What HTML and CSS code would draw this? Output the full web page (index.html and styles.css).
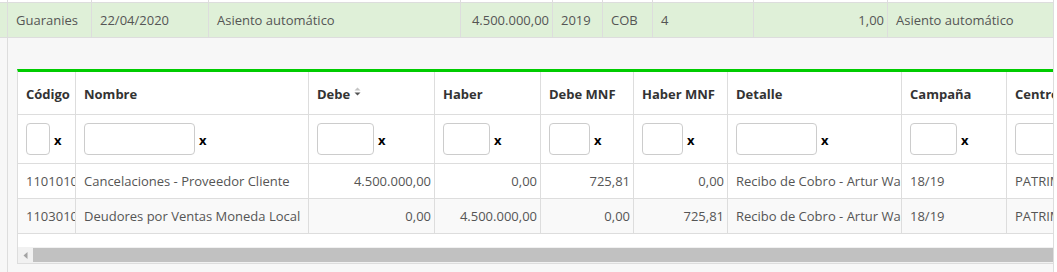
FILE: index.html
```html
<!DOCTYPE html>
<html lang="es">
<head>
<meta charset="utf-8">
<title>Asientos</title>
<link rel="stylesheet" href="styles.css">
</head>
<body>
<table class="grid">
  <colgroup>
    <col class="g0"><col class="g1"><col class="g2"><col class="g3"><col class="g4">
    <col class="g5"><col class="g6"><col class="g7"><col class="g8"><col class="g9">
  </colgroup>
  <tr class="strip">
    <td><div class="fill"></div></td><td><div class="fill"></div></td><td><div class="fill"></div></td>
    <td><div class="fill"></div></td><td><div class="fill"></div></td><td><div class="fill"></div></td>
    <td><div class="fill"></div></td><td><div class="fill"></div></td><td><div class="fill"></div></td>
    <td><div class="fill"></div></td>
  </tr>
  <tr class="success">
    <td></td>
    <td>Guaranies</td>
    <td>22/04/2020</td>
    <td>Asiento automático</td>
    <td class="num">4.500.000,00</td>
    <td>2019</td>
    <td>COB</td>
    <td>4</td>
    <td class="num">1,00</td>
    <td>Asiento automático</td>
  </tr>
  <tr class="detail-row">
    <td class="gutter"></td>
    <td colspan="9" class="detail-cell">
      <div class="detail">
        <div class="panel">
          <div class="sub-wrap">
            <table class="sub">
              <colgroup>
                <col class="s0"><col class="s1"><col class="s2"><col class="s3"><col class="s4">
                <col class="s5"><col class="s6"><col class="s7"><col class="s8">
              </colgroup>
              <tr class="head">
                <th>Código</th>
                <th>Nombre</th>
                <th>Debe<svg class="sort" width="8" height="10" viewBox="0 0 8 10"><path d="M0.5 3.5 L3.5 0.5 L6.5 3.5 Z" fill="#c4c4c4"/><path d="M0.5 5.5 L6.5 5.5 L3.5 8.5 Z" fill="#555"/></svg></th>
                <th>Haber</th>
                <th>Debe MNF</th>
                <th>Haber MNF</th>
                <th>Detalle</th>
                <th>Campaña</th>
                <th>Centro de Costo</th>
              </tr>
              <tr class="filters">
                <td><div class="flt"><input class="in w24" type="text"><span class="clr">x</span></div></td>
                <td><div class="flt"><input class="in w111" type="text"><span class="clr">x</span></div></td>
                <td><div class="flt"><input class="in w57" type="text"><span class="clr">x</span></div></td>
                <td><div class="flt"><input class="in w47" type="text"><span class="clr">x</span></div></td>
                <td><div class="flt"><input class="in w41" type="text"><span class="clr">x</span></div></td>
                <td><div class="flt"><input class="in w41" type="text"><span class="clr">x</span></div></td>
                <td><div class="flt"><input class="in w81" type="text"><span class="clr">x</span></div></td>
                <td><div class="flt"><input class="in w47" type="text"><span class="clr">x</span></div></td>
                <td><div class="flt"><input class="in w81" type="text"><span class="clr">x</span></div></td>
              </tr>
              <tr class="data">
                <td>1101010</td>
                <td>Cancelaciones - Proveedor Cliente</td>
                <td class="num">4.500.000,00</td>
                <td class="num">0,00</td>
                <td class="num">725,81</td>
                <td class="num">0,00</td>
                <td>Recibo de Cobro - Artur Walter</td>
                <td>18/19</td>
                <td>PATRIMONIO</td>
              </tr>
              <tr class="data alt">
                <td>1103010</td>
                <td>Deudores por Ventas Moneda Local</td>
                <td class="num">0,00</td>
                <td class="num">4.500.000,00</td>
                <td class="num">0,00</td>
                <td class="num">725,81</td>
                <td>Recibo de Cobro - Artur Walter</td>
                <td>18/19</td>
                <td>PATRIMONIO</td>
              </tr>
            </table>
          </div>
          <div class="hscroll">
            <span class="arrow"><svg width="5" height="7" viewBox="0 0 5 7"><path d="M4.5 0 L0.5 3.5 L4.5 7 Z" fill="#a3a3a3"/></svg></span>
            <span class="thumb"></span>
          </div>
        </div>
      </div>
    </td>
  </tr>
</table>
</body>
</html>
```

FILE: styles.css
```css
html, body {
  margin: 0;
  background: #fff;
}

body {
  font-family: "Open Sans", "DejaVu Sans", sans-serif;
  font-size: 13px;
  color: #555;
  height: 272px;
  overflow: hidden;
}

table {
  border-collapse: separate;
  border-spacing: 0;
  table-layout: fixed;
}

.grid {
  width: 1054px;
}

.g0 { width: 8px; }
.g1 { width: 84px; }
.g2 { width: 117px; }
.g3 { width: 252px; }
.g4 { width: 92px; }
.g5 { width: 50px; }
.g6 { width: 50px; }
.g7 { width: 101px; }
.g8 { width: 134px; }
.g9 { width: 166px; }

.grid td {
  border-right: 1px solid #ddd;
  border-bottom: 1px solid #ddd;
  padding: 8px;
  line-height: 18px;
  white-space: nowrap;
  overflow: hidden;
  vertical-align: top;
}

.grid .strip td {
  padding: 0;
  line-height: 0;
}

.fill {
  height: 2px;
}

.success td {
  background: #dff0d8;
}

.grid td.num,
.sub td.num {
  text-align: right;
  padding-right: 3px;
}

.grid td.gutter,
.grid td.detail-cell {
  padding: 0;
  background: #f7f7f7;
  border-bottom: none;
}

.detail {
  overflow: hidden;
  padding: 31px 0 10px 9px;
}

.panel {
  width: 1060px;
  background: #fff;
  border: 1px solid #ddd;
  border-top: 3px solid #00cc00;
}

.sub-wrap {
  overflow: hidden;
}

.sub {
  width: 1139px;
}

.s0 { width: 58px; }
.s1 { width: 233px; }
.s2 { width: 126px; }
.s3 { width: 106px; }
.s4 { width: 93px; }
.s5 { width: 94px; }
.s6 { width: 174px; }
.s7 { width: 105px; }
.s8 { width: 150px; }

.sub th,
.sub td {
  border-right: 1px solid #ddd;
  border-bottom: 1px solid #ddd;
  padding: 8px;
  line-height: 18px;
  white-space: nowrap;
  overflow: hidden;
  text-align: left;
  vertical-align: top;
}

.sub th {
  font-weight: 700;
  color: #333;
  padding-top: 13px;
  padding-bottom: 11px;
}

.sort {
  margin-left: 4px;
  vertical-align: 2px;
}

.flt {
  display: flex;
  align-items: center;
  gap: 4px;
  height: 32px;
}

.in {
  box-sizing: border-box;
  height: 32px;
  margin: 0;
  padding: 0 6px;
  border: 1px solid #ccc;
  border-radius: 4px;
  background: #fff;
  font: inherit;
  flex: none;
}

.w24 { width: 24px; }
.w41 { width: 41px; }
.w47 { width: 47px; }
.w57 { width: 57px; }
.w81 { width: 81px; }
.w111 { width: 111px; }

.clr {
  font-weight: 700;
  color: #000;
  font-size: 13px;
  line-height: 18px;
  padding-top: 2px;
}

.data.alt td {
  background: #f9f9f9;
}

.hscroll {
  display: flex;
  height: 16px;
  margin-top: 13px;
  background: #f1f1f1;
}

.arrow {
  width: 15px;
  display: flex;
  align-items: center;
  justify-content: center;
  flex: none;
}

.arrow svg {
  display: block;
}

.thumb {
  flex: 1;
  margin: 1px 0;
  background: #c1c1c1;
}
```
